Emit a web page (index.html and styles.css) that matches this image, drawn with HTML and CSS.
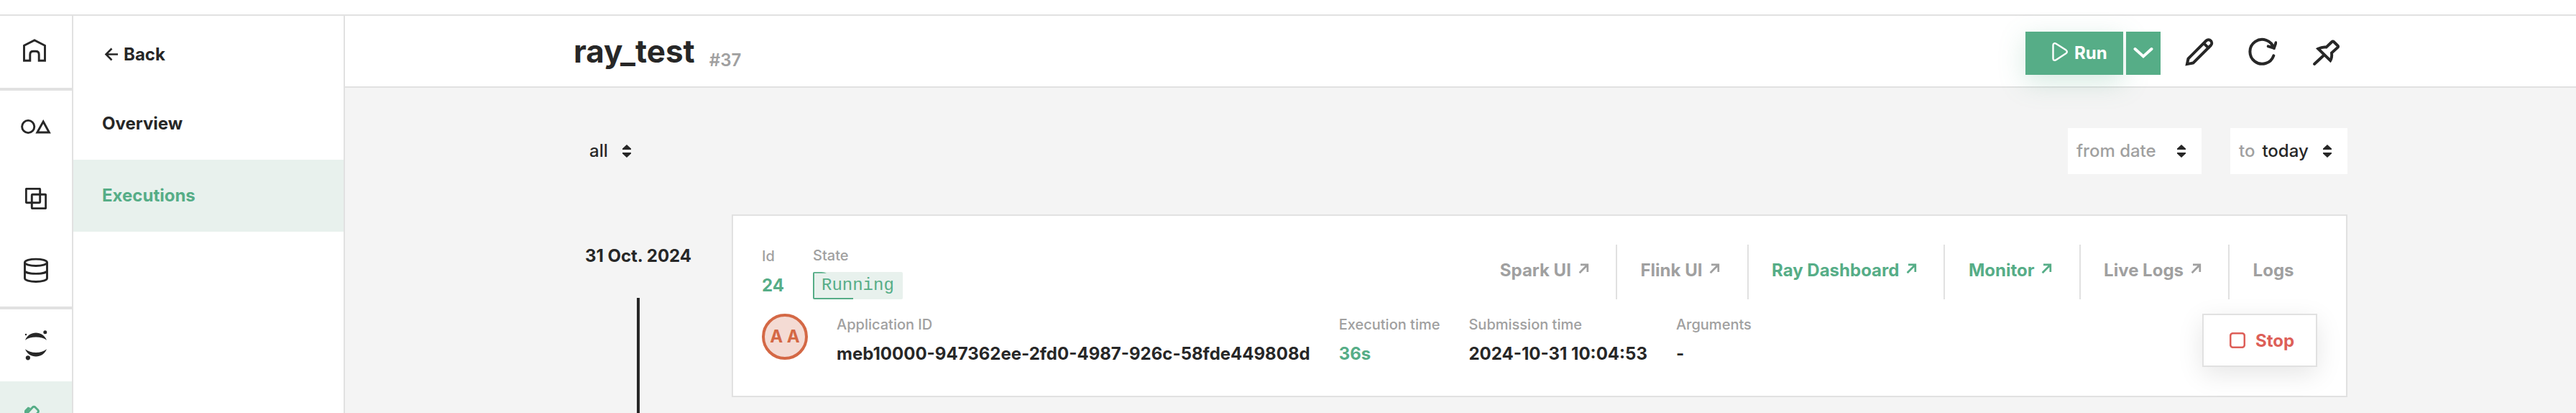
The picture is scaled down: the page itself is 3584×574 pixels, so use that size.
FILE: index.html
```
<!DOCTYPE html>
<html lang="en">
<head>
<meta charset="utf-8">
<title>ray_test</title>
<link rel="stylesheet" href="styles.css">
</head>
<body>
<svg class="defs" width="0" height="0">
  <defs>
    <symbol id="sorter" viewBox="0 0 12 18"><path d="M6 0l6 5.400V7H0V5.400zM6 18l6-5.400V11H0v1.600z"/></symbol>
    <symbol id="out" viewBox="0 0 24 24"><path d="M7 5.900H16.800V16M16.500 6.200L5.600 17.200" fill="none" stroke="currentColor" stroke-width="2.700"/></symbol>
  </defs>
</svg>
<div class="app">
  <div class="topbar"></div>
  <div class="body">
    <nav class="rail">
      <a class="rail-item"><svg class="home" width="32" height="32" viewBox="0 0 32 32"><path d="M1.500 9.300L16 1.900l14.500 7.400V30.300h-8.300V21.800q0-4.500-4.500-4.500h-3.400q-4.500 0-4.500 4.500v8.500H1.500z"/></svg></a>
      <div class="rail-line"></div>
      <a class="rail-item"><svg width="44" height="22" viewBox="0 0 44 22"><circle cx="11.200" cy="11" r="8.600"/><path d="M32.200 4L40.400 19H23.800z"/></svg></a>
      <a class="rail-item"><svg width="30" height="30" viewBox="0 0 30 30"><rect x="1.300" y="1.300" width="19.400" height="19.400" rx="1"/><rect x="9.300" y="9.300" width="19.400" height="19.400" rx="1"/></svg></a>
      <a class="rail-item"><svg width="34" height="36" viewBox="0 0 34 36"><ellipse cx="17" cy="6.800" rx="15.500" ry="4.700"/><path d="M1.500 6.800v22c0 2.600 6.900 4.700 15.500 4.700s15.500-2.100 15.500-4.700v-22M1.500 18c0 2.600 6.900 4.400 15.500 4.400S32.500 20.600 32.500 18"/></svg></a>
      <div class="rail-line"></div>
      <a class="rail-item"><svg class="solid" width="32" height="42" viewBox="0 0 32 42"><path d="M1 13.800C4 7 9.500 3.600 16 3.600S28 7 31 13.800C27 10.600 22 9.400 16 9.400S5 10.600 1 13.800zM1 26.200c3 6.800 8.500 10.200 15 10.200s12-3.400 15-10.200c-4 3.200-9 4.700-15 4.700S5 29.400 1 26.200z"/><circle cx="28.800" cy="2.700" r="2.500"/><circle cx="2" cy="6" r="1.200"/><circle cx="4.900" cy="38.300" r="3.100"/></svg></a>
      <a class="rail-item active"><svg width="38" height="38" viewBox="0 0 38 38"><path d="M3.500 17L14.200 5.200q2-1.800 4 0l3.500 3.500q1.600 2-.2 4L11 23"/><path class="fill" d="M3 14v-4.500l5-5 3.500 1.500-7 9z"/></svg></a>
    </nav>
    <nav class="side">
      <a class="side-item back"><svg width="20" height="20" viewBox="0 0 20 20"><path d="M19 10.500H2.500M10.500 2.500l-8 8 8 8"/></svg><span>Back</span></a>
      <a class="side-item">Overview</a>
      <a class="side-item active">Executions</a>
    </nav>
    <main class="main">
      <header class="header">
        <div class="wrap">
          <h1 class="title">ray_test</h1><span class="number">#37</span>
          <div class="actions">
            <button class="run"><svg width="24" height="28" viewBox="0 0 24 28"><path d="M2.500 4.500C2.500 2 5 1.700 6.600 2.700L20.400 11.600C22.300 13 22.300 15 20.400 16.300L6.600 25.300C5 26.300 2.500 26 2.500 23.500z"/></svg><span>Run</span></button>
            <button class="more"><svg width="28" height="18" viewBox="0 0 28 18"><path d="M2.500 3L14 13.400L25.500 3"/></svg></button>
            <div class="tools">
              <svg width="40" height="40" viewBox="0 0 40 40"><path d="M2.900 37.100L4.500 29.500L29.500 4.500A4.600 4.600 0 0 1 36 11L11.500 35.500zM26.300 8.300L32.700 14.700"/></svg>
              <svg width="40" height="40" viewBox="0 0 40 40"><path d="M35.300 25.300A16.900 16.900 0 1 1 35.500 15M38.500 7.300L35.900 14.800L27.800 12.400"/></svg>
              <svg width="40" height="40" viewBox="0 0 40 40"><path d="M4 37L17.500 24.500M9.300 15.800Q15 12.800 20.500 13.600L28.500 6q1.200-1.200 2.400 0L36.500 11.500q1.200 1.200 0 2.400L28 21.500Q28.800 28 26.200 32.200z"/></svg>
            </div>
          </div>
        </div>
      </header>
      <section class="wrap filters">
        <div class="filter plain"><span>all</span><svg class="sorter"><use href="#sorter"/></svg></div>
        <div class="dates">
          <div class="filter from"><span class="muted">from date</span><svg class="sorter"><use href="#sorter"/></svg></div>
          <div class="filter to"><span class="muted">to</span><span class="today">today</span><svg class="sorter"><use href="#sorter"/></svg></div>
        </div>
      </section>
      <section class="wrap timeline">
        <div class="day"><div class="date">31 Oct. 2024</div><div class="track"></div></div>
        <article class="card">
          <div class="row">
            <div class="stat id"><div class="label">Id</div><div class="value green">24</div></div>
            <div class="stat state"><div class="label">State</div>
              <div class="badge">Running<svg class="progress" width="125" height="38" viewBox="0 0 125 38"><path d="M2 0H12Q16 .3 19 1.700H2V36H56v2H2Q0 38 0 36V2Q0 0 2 0z"/></svg></div>
            </div>
            <div class="links">
              <a class="link">Spark UI<svg class="out"><use href="#out"/></svg></a>
              <a class="link">Flink UI<svg class="out"><use href="#out"/></svg></a>
              <a class="link green">Ray Dashboard<svg class="out"><use href="#out"/></svg></a>
              <a class="link green">Monitor<svg class="out"><use href="#out"/></svg></a>
              <a class="link">Live Logs<svg class="out"><use href="#out"/></svg></a>
              <a class="link">Logs</a>
            </div>
          </div>
          <div class="row second">
            <div class="avatar">A A</div>
            <div class="info"><div class="label">Application ID</div><div class="value">meb10000-947362ee-2fd0-4987-926c-58fde449808d</div></div>
            <div class="info"><div class="label">Execution time</div><div class="value green">36s</div></div>
            <div class="info"><div class="label">Submission time</div><div class="value">2024-10-31 10:04:53</div></div>
            <div class="info"><div class="label">Arguments</div><div class="value">-</div></div>
            <button class="stop"><svg width="22" height="22" viewBox="0 0 22 22"><rect x="1.200" y="1.200" width="19.600" height="19.600" rx="3.500"/></svg><span>Stop</span></button>
          </div>
        </article>
      </section>
    </main>
  </div>
</div>
</body>
</html>
```
FILE: styles.css
```
* { box-sizing: border-box; }
body { margin: 0; font-family: Inter, sans-serif; font-size: 24px; color: #272727; background: #fff; overflow: hidden; }
svg { display: block; flex: none; }
button { font: inherit; border: 0; padding: 0; margin: 0; }
.defs { position: absolute; }
.app { display: flex; flex-direction: column; height: 574px; overflow: hidden; }
.topbar { height: 22px; flex: none; border-bottom: 2px solid #e1e1e1; }
.body { display: flex; flex: 1; min-height: 0; }

.rail { width: 102px; flex: none; border-right: 2px solid #e1e1e1; overflow: hidden; }
.rail-item { display: flex; align-items: center; justify-content: center; height: 100px; }
.rail-item svg { fill: none; stroke: #272727; stroke-width: 2.9; }
.rail-item .home { margin: -4px 4px 0 0; }
.rail-item .solid { fill: #272727; stroke: none; }
.rail-item.active { background: #e8f1ed; }
.rail-item.active svg { stroke: #56ad87; }
.rail-item.active .fill { fill: #56ad87; stroke: none; }
.rail-line { height: 4px; background: #e1e1e1; }

.side { width: 378px; flex: none; border-right: 2px solid #e1e1e1; }
.side-item { display: flex; align-items: center; height: 100px; padding: 0 0 2px 40px; font-weight: 700; }
.side-item.back { padding: 6px 0 0 43px; gap: 7px; }
.side-item.back svg { fill: none; stroke: #272727; stroke-width: 2.6; }
.side-item.active { background: #e8f1ed; color: #56ad87; }

.main { flex: 1; background: #f4f4f4; }
.wrap { width: 2468px; margin-left: 318px; }
.header { height: 100px; background: #fff; border-bottom: 2px solid #e1e1e1; }
.header .wrap { display: flex; align-items: flex-start; height: 98px; }
.title { margin: 0; font-size: 44px; line-height: 98px; font-weight: 700; }
.number { margin: 47px 0 0 20px; line-height: 30px; font-weight: 600; color: #a0a0a0; }
.actions { display: flex; align-items: flex-start; margin-left: auto; padding-top: 22px; }
.run { display: flex; align-items: center; width: 136px; height: 60px; padding: 0 0 2px 36px; gap: 8px; background: #56ad87; color: #fff; font-weight: 700; box-shadow: 0 10px 36px rgba(86, 173, 135, .25); }
.run svg, .more svg { fill: none; stroke: #fff; stroke-width: 2.4; stroke-linecap: round; }
.run svg { margin-top: -2px; }
.more { display: flex; align-items: center; justify-content: center; width: 48px; height: 60px; margin-left: 4px; background: #56ad87; }
.more svg { stroke-width: 4; }
.tools { display: flex; gap: 48px; padding: 8px 10px 0 34px; }
.tools svg { fill: none; stroke: #272727; stroke-width: 4; stroke-linecap: round; }

.filters { display: flex; justify-content: space-between; padding-top: 56px; font-weight: 500; }
.filter { display: flex; align-items: center; height: 64px; background: #fff; }
.filter span { padding-bottom: 1px; }
.filter.plain { width: 102px; padding: 0 22px; background: none; }
.sorter { width: 12px; height: 18px; margin-left: auto; fill: #272727; }
.muted { color: #a0a0a0; }
.dates { display: flex; gap: 40px; }
.filter.from { width: 186px; padding: 0 22px 0 12px; }
.filter.to { width: 163px; padding: 0 22px 0 12px; }
.today { margin-left: 10px; }

.timeline { display: flex; padding-top: 56px; }
.day { display: flex; flex-direction: column; align-items: center; width: 180px; margin-right: 40px; }
.date { height: 116px; padding-top: 43px; line-height: 30px; font-weight: 700; white-space: nowrap; }
.track { width: 4px; height: 200px; background: #272727; }
.card { width: 2248px; height: 254px; padding: 40px; border: 2px solid #e1e1e1; background: #fff; }
.row { display: flex; align-items: flex-start; height: 76px; }
.row.second { margin-top: 20px; }
.label { font-size: 20px; line-height: 30px; font-weight: 500; color: #a0a0a0; white-space: nowrap; }
.value { line-height: 40px; font-weight: 700; white-space: nowrap; }
.green { color: #56ad87; }
.stat.id { width: 71px; padding-top: 1px; }
.stat.id .value { margin-top: 6px; }
.badge { position: relative; width: 125px; height: 38px; margin-top: 8px; padding-left: 12px; border-radius: 2px; background: #e8f1ed; color: #56ad87; font: 24px/38px "Liberation Mono", monospace; }
.progress { position: absolute; left: 0; top: 0; fill: #56ad87; }
.links { display: flex; margin-left: auto; }
.link { display: flex; align-items: center; height: 76px; padding: 0 32.5px 5px; border-left: 2px solid #e1e1e1; color: #a0a0a0; font-weight: 700; white-space: nowrap; }
.link:first-child { border-left: 0; }
.link.green { color: #56ad87; }
.out { width: 24px; height: 24px; margin: -3px 0 0 5.6px; }
.avatar { width: 64px; height: 64px; margin-right: 40px; border: 4px solid #d46845; border-radius: 50%; background: #f4dbd4; color: #d46845; font-weight: 700; line-height: 56px; text-align: center; }
.info { margin-right: 40px; }
.info .value { margin-top: 6px; }
.stop { display: flex; align-items: center; width: 160px; height: 74px; margin-left: auto; padding-left: 36px; gap: 14px; border: 2px solid #e1e1e1; background: #fff; color: #dd5f58; font-weight: 700; box-shadow: 0 10px 36px rgba(0, 0, 0, .1); }
.stop svg { fill: none; stroke: #dd5f58; stroke-width: 2.6; }
```
